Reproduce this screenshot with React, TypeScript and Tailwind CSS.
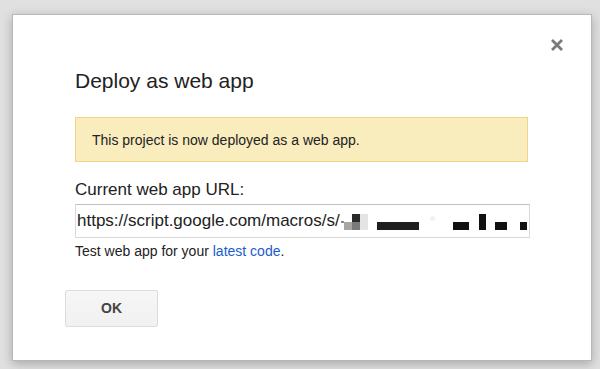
import React from "react";

function Redaction() {
  return (
    <div className="flex items-end h-[16px] mt-[2px] ml-[1px] shrink-0">
      <span className="w-[3px] h-[2px] bg-[#888] mb-[7px]" />
      <div className="flex flex-col">
        <span className="w-[8px] h-[8px]" />
        <span className="w-[8px] h-[8px] bg-[#a6a6a6]" />
      </div>
      <div className="flex flex-col">
        <span className="w-[8px] h-[8px] bg-[#2a2a2a]" />
        <span className="w-[8px] h-[8px] bg-[#7a7a7a]" />
      </div>
      <span className="w-[8px] h-[16px] bg-[#e4e4e4]" />
      <span className="ml-[9px] w-[42px] h-[8px] bg-[#1e1e1e]" />
      <span className="ml-[11px] mb-[9px] w-[5px] h-[5px] rounded-full bg-[#f2f2f2]" />
      <span className="ml-[18px] w-[16px] h-[8px] bg-[#111]" />
      <span className="ml-[10px] w-[7px] h-[16px] bg-[#111]" />
      <span className="ml-[9px] w-[12px] h-[8px] bg-[#111]" />
      <span className="ml-[13px] w-[7px] h-[8px] bg-[#111]" />
      <span className="ml-[2px] w-[1px] h-[16px] bg-[#555]" />
    </div>
  );
}

export default function App() {
  return (
    <div
      className="w-[600px] h-[369px] bg-[#e0e0e0] overflow-hidden pt-[14px] pl-[12px]"
      style={{ fontFamily: '"Liberation Sans", Arial, sans-serif' }}
    >
      <div className="relative w-[580px] h-[347px] bg-white border border-[#b8b8b8] shadow-[0_3px_10px_rgba(0,0,0,0.25)] pl-[62px] pt-[54px]">
        <button className="absolute right-[26px] top-[22px] w-[16px] h-[16px] flex items-center justify-center">
          <svg width="14" height="14" viewBox="0 0 14 14">
            <path d="M2 2 L12 12 M12 2 L2 12" stroke="#7a7a7a" strokeWidth="2.8" />
          </svg>
        </button>

        <div className="flex flex-col items-start">
          <h1 className="text-[21px] leading-[24px] text-[#222]">Deploy as web app</h1>

          <div className="mt-[24px] w-[453px] h-[45px] bg-[#f9edbe] border border-[#f0d48a] flex items-center pl-[16px]">
            <span className="text-[14px] leading-[16px] text-[#222]">This project is now deployed as a web app.</span>
          </div>

          <div className="mt-[18px] text-[17px] leading-[20px] text-[#222]">Current web app URL:</div>

          <div className="mt-[4px] w-[455px] h-[34px] border border-[#d9d9d9] border-t-[#c0c0c0] flex items-center pl-[1px] overflow-hidden">
            <span className="text-[17px] leading-[20px] text-[#222] whitespace-nowrap">https://script.google.com/macros/s/</span>
            <Redaction />
          </div>

          <div className="mt-[5px] text-[14px] leading-[16px] text-[#222]">
            Test web app for your <a className="text-[#1a5ccf]">latest code</a>.
          </div>

          <button className="mt-[31px] -ml-[10px] w-[93px] h-[37px] rounded-[2px] border border-[#dcdcdc] bg-gradient-to-b from-[#f6f6f6] to-[#f1f1f1] text-[14px] font-bold text-[#444]">
            OK
          </button>
        </div>
      </div>
    </div>
  );
}
